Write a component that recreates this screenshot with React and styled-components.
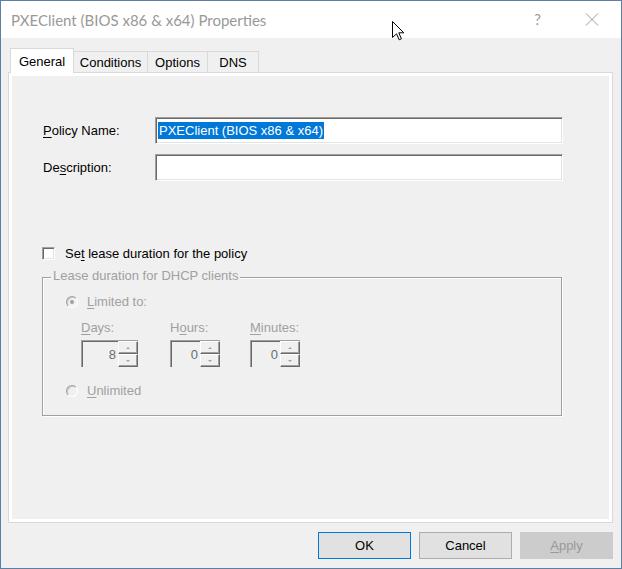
import { createGlobalStyle, styled } from 'styled-components'

const GlobalStyle = createGlobalStyle`
  html, body {
    margin: 0;
    padding: 0;
    background: #fff;
  }
  body {
    font-family: "Liberation Sans", Arial, sans-serif;
  }
`

const App = () => {
  return (
    <>
      <GlobalStyle />
      <Window>
        <TitleBar>
          <Title>PXEClient (BIOS x86 &amp; x64) Properties</Title>
          <Controls>
            <Help>?</Help>
            <svg width='14' height='13' viewBox='0 0 14 13'>
              <path d='M1 0.5 L13 12.5 M13 0.5 L1 12.5' stroke='#999' strokeWidth='1' fill='none' />
            </svg>
          </Controls>
        </TitleBar>

        <Body>
          <TabStrip>
            <Tab $w={64} $active>General</Tab>
            <Tab $w={75}>Conditions</Tab>
            <Tab $w={61}>Options</Tab>
            <Tab $w={52}>DNS</Tab>
          </TabStrip>

          <Panel>
            <Fields>
              <Field>
                <Label><U>P</U>olicy Name:</Label>
                <TextBox>
                  <Selected>PXEClient (BIOS x86 &amp; x64)</Selected>
                </TextBox>
              </Field>
              <Field>
                <Label>De<U>s</U>cription:</Label>
                <TextBox />
              </Field>
            </Fields>

            <CheckRow>
              <CheckBox />
              <span>Se<U>t</U> lease duration for the policy</span>
            </CheckRow>

            <GroupBox>
              <Legend>Lease duration for DHCP clients</Legend>
              <RadioRow>
                <Radio $checked />
                <span><U>L</U>imited to:</span>
              </RadioRow>

              <SpinGrid>
                <SpinColumn>
                  <Dim><U>D</U>ays:</Dim>
                  <SpinBox $w={57}>
                    <SpinValue>8</SpinValue>
                    <SpinButtons>
                      <SpinBtn $up />
                      <SpinBtn />
                    </SpinButtons>
                  </SpinBox>
                </SpinColumn>
                <SpinColumn>
                  <Dim>H<U>o</U>urs:</Dim>
                  <SpinBox $w={50}>
                    <SpinValue>0</SpinValue>
                    <SpinButtons>
                      <SpinBtn $up />
                      <SpinBtn />
                    </SpinButtons>
                  </SpinBox>
                </SpinColumn>
                <SpinColumn>
                  <Dim><U>M</U>inutes:</Dim>
                  <SpinBox $w={50}>
                    <SpinValue>0</SpinValue>
                    <SpinButtons>
                      <SpinBtn $up />
                      <SpinBtn />
                    </SpinButtons>
                  </SpinBox>
                </SpinColumn>
              </SpinGrid>

              <RadioRow className='last'>
                <Radio />
                <span><U>U</U>nlimited</span>
              </RadioRow>
            </GroupBox>
          </Panel>

          <ButtonRow>
            <Button $variant='default'>OK</Button>
            <Button>Cancel</Button>
            <Button $variant='disabled'><U>A</U>pply</Button>
          </ButtonRow>
        </Body>

        {/* mouse pointer over the title bar */}
        <Cursor width='13' height='20' viewBox='0 0 13 20'>
          <path
            d='M0.5 0.5 L0.5 16.5 L4.5 12.8 L7.2 18.8 L9.4 17.8 L6.8 11.8 L11.8 11.8 Z'
            fill='#fff'
            stroke='#000'
            strokeWidth='1'
            strokeLinejoin='miter'
          />
        </Cursor>
      </Window>
    </>
  )
}

const Window = styled.div`
  position: relative;
  width: 622px;
  height: 569px;
  box-sizing: border-box;
  border: 1px solid #5b7fa5;
  background: #f0f0f0;
  display: flex;
  flex-direction: column;
  overflow: hidden;
`

const TitleBar = styled.div`
  height: 37px;
  flex-shrink: 0;
  background: #fff;
  display: flex;
  align-items: center;
  padding-left: 10px;
`

const Title = styled.div`
  font-family: "Segoe UI", Lato, "Noto Sans", sans-serif;
  font-size: 15px;
  color: #999;
`

const Controls = styled.div`
  margin-left: auto;
  display: flex;
  align-items: center;
  margin-right: 22px;
  gap: 44px;
`

const Help = styled.span`
  font-family: "Segoe UI", Lato, "Noto Sans", sans-serif;
  font-size: 15px;
  color: #999;
  margin-top: -2px;
`

const Cursor = styled.svg`
  position: absolute;
  left: 391px;
  top: 20px;
`

const Body = styled.div`
  flex: 1;
  display: flex;
  flex-direction: column;
  padding: 10px 8px 9px 7px;
  font-size: 13px;
  color: #000;
`

const TabStrip = styled.div`
  display: flex;
  align-items: flex-end;
  height: 25px;
  margin-left: 2px;
  margin-bottom: -1px;
  position: relative;
  z-index: 1;
`

const Tab = styled.div`
  box-sizing: border-box;
  width: ${(p) => p.$w}px;
  height: ${(p) => (p.$active ? 25 : 22)}px;
  display: flex;
  align-items: center;
  justify-content: center;
  border: 1px solid #d9d9d9;
  border-bottom: ${(p) => (p.$active ? 'none' : '1px solid #d9d9d9')};
  background: ${(p) => (p.$active ? '#fff' : '#f0f0f0')};
  padding-top: ${(p) => (p.$active ? 0 : 1)}px;
  & + & {
    margin-left: -1px;
  }
`

const Panel = styled.div`
  box-sizing: border-box;
  height: 451px;
  border: 1px solid #d9d9d9;
  box-shadow: inset 0 0 0 3px #fff;
  padding: 44px 0 0 34px;
`

const Fields = styled.div`
  display: flex;
  flex-direction: column;
  gap: 10px;
`

const Field = styled.div`
  display: flex;
  align-items: center;
  height: 27px;
`

const Label = styled.span`
  width: 112px;
`

const U = styled.span`
  text-decoration: underline;
  text-underline-offset: 2px;
`

const TextBox = styled.div`
  box-sizing: border-box;
  width: 408px;
  height: 27px;
  background: #fff;
  border: 1px solid;
  border-color: #a0a0a0 #fff #fff #a0a0a0;
  box-shadow: inset 1px 1px 0 #696969, inset -1px -1px 0 #e3e3e3;
  display: flex;
  align-items: center;
  padding-left: 2px;
`

const Selected = styled.span`
  background: #0078d7;
  color: #fff;
  line-height: 17px;
  padding: 0 1px;
`

const CheckRow = styled.div`
  display: flex;
  align-items: center;
  gap: 10px;
  margin-top: 65px;
  margin-left: -1px;
  line-height: 15px;
`

const CheckBox = styled.span`
  box-sizing: border-box;
  width: 13px;
  height: 13px;
  background: #fff;
  border: 1px solid;
  border-color: #a0a0a0 #fff #fff #a0a0a0;
  box-shadow: inset 1px 1px 0 #696969, inset -1px -1px 0 #e3e3e3;
`

const GroupBox = styled.div`
  position: relative;
  box-sizing: border-box;
  width: 520px;
  height: 139px;
  margin-top: 16px;
  margin-left: -1px;
  border: 1px solid #a0a0a0;
  box-shadow: inset 1px 1px 0 #fff, 1px 1px 0 #fff;
  padding: 16px 0 0 23px;
  color: #a0a0a0;
  line-height: 15px;

  .last {
    margin-top: 16px;
  }
`

const Legend = styled.span`
  position: absolute;
  left: 8px;
  top: -10px;
  padding: 0 2px;
  background: #f0f0f0;
`

const RadioRow = styled.div`
  display: flex;
  align-items: center;
  gap: 9px;
  height: 15px;
`

const Radio = styled.span`
  box-sizing: border-box;
  width: 12px;
  height: 12px;
  border-radius: 50%;
  border: 1px solid;
  border-color: #a0a0a0 #fff #fff #a0a0a0;
  box-shadow: inset 1px 1px 0 #c8c8c8;
  background: #f0f0f0;
  display: flex;
  align-items: center;
  justify-content: center;
  &::after {
    content: '';
    width: 4px;
    height: 4px;
    border-radius: 50%;
    background: ${(p) => (p.$checked ? '#a0a0a0' : 'transparent')};
  }
`

const SpinGrid = styled.div`
  display: grid;
  grid-template-columns: 89px 80px auto;
  margin-top: 11px;
  margin-left: 15px;
`

const SpinColumn = styled.div`
  display: flex;
  flex-direction: column;
  gap: 5px;
`

const Dim = styled.span`
  color: #a0a0a0;
`

const SpinBox = styled.div`
  box-sizing: border-box;
  width: ${(p) => p.$w}px;
  height: 27px;
  display: flex;
  border-top: 1px solid #a0a0a0;
  border-left: 1px solid #a0a0a0;
  box-shadow: inset 1px 1px 0 #696969;
  background: #f0f0f0;
`

const SpinValue = styled.div`
  flex: 1;
  display: flex;
  align-items: center;
  justify-content: flex-end;
  padding-right: 2px;
  color: #6d6d6d;
`

const SpinButtons = styled.div`
  display: flex;
  flex-direction: column;
  width: 20px;
`

const SpinBtn = styled.div`
  flex: 1;
  box-sizing: border-box;
  border-top: 1px solid #fff;
  border-left: 1px solid #fff;
  border-right: 1px solid #696969;
  border-bottom: 1px solid #696969;
  box-shadow: inset -1px -1px 0 #a0a0a0;
  display: flex;
  align-items: center;
  justify-content: center;
  &::after {
    content: '';
    border-left: 2px solid transparent;
    border-right: 2px solid transparent;
    ${(p) =>
      p.$up ? 'border-bottom: 2px solid #a0a0a0;' : 'border-top: 2px solid #a0a0a0;'}
  }
`

const ButtonRow = styled.div`
  display: flex;
  justify-content: flex-end;
  gap: 8px;
  margin-top: 9px;
`

const Button = styled.div`
  box-sizing: border-box;
  width: 93px;
  height: 27px;
  display: flex;
  align-items: center;
  justify-content: center;
  border: 1px solid
    ${(p) =>
      p.$variant === 'default' ? '#0078d7' : p.$variant === 'disabled' ? '#cccccc' : '#adadad'};
  background: ${(p) => (p.$variant === 'disabled' ? '#cccccc' : '#e1e1e1')};
  color: ${(p) => (p.$variant === 'disabled' ? '#999' : '#000')};
`

export default App
